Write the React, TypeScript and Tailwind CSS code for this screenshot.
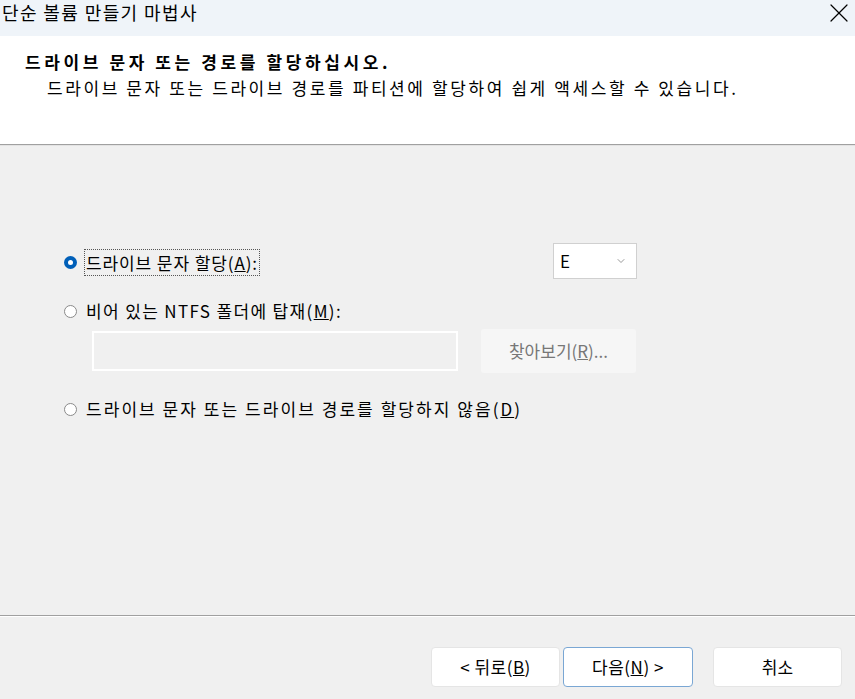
import { ChevronDown, X } from 'lucide-react';

const font = { fontFamily: '"Noto Sans CJK KR", "Noto Sans", sans-serif' };

function Radio({ checked }: { checked?: boolean }) {
  return checked ? (
    <span className="inline-flex h-[13px] w-[13px] shrink-0 items-center justify-center rounded-full bg-[#005fb8]">
      <span className="h-[5px] w-[5px] rounded-full bg-white" />
    </span>
  ) : (
    <span className="inline-block h-[13px] w-[13px] shrink-0 rounded-full border border-[#8a8a8a] bg-white" />
  );
}

export default function App() {
  return (
    <div className="flex h-[699px] w-[855px] flex-col bg-[#f0f0f0] text-[17px] text-black" style={font}>
      {/* 제목 표시줄 */}
      <div className="flex h-[36px] items-start justify-between bg-[#eff4f9] pl-[2px]">
        <span className="mt-[2px] text-[18px] leading-[20px] tracking-[1.4px]">단순 볼륨 만들기 마법사</span>
        <X className="mt-[-3px] h-[32px] w-[32px]" strokeWidth={0.9} />
      </div>

      {/* 헤더 */}
      <div className="h-[108px] bg-white pl-[25px] pt-[15px]">
        <div className="text-[17px] font-bold leading-[22px] tracking-[3.6px]">드라이브 문자 또는 경로를 할당하십시오.</div>
        <div className="mt-[3px] pl-[22px] text-[17px] leading-[24px] tracking-[2.6px]">
          드라이브 문자 또는 드라이브 경로를 파티션에 할당하여 쉽게 액세스할 수 있습니다.
        </div>
      </div>
      <div className="h-px bg-[#a0a0a0]" />
      <div className="h-px bg-[#e3e3e3]" />

      {/* 본문 */}
      <div className="flex h-[469px] flex-col pl-[64px] pt-[97px]">
        <div className="flex h-[36px] items-start">
          <div className="flex w-[489px] items-center pt-[6px]">
            <Radio checked />
            <span className="ml-[7px] border border-dotted border-[#555] pl-[1px] pr-[1px] leading-[25px] tracking-[0.9px]">
              드라이브 문자 할당(<u>A</u>):
            </span>
          </div>
          <div className="flex h-[36px] w-[84px] items-center justify-between border border-[#d0d0d0] bg-white pl-[6px] pr-[9px]">
            <span className="text-[17px]">E</span>
            <ChevronDown className="h-[12px] w-[12px] text-[#777]" strokeWidth={1.5} />
          </div>
        </div>

        <div className="mt-[20px] flex h-[24px] items-center">
          <Radio />
          <span className="ml-[9px] tracking-[1.35px]">
            비어 있는 NTFS 폴더에 탑재(<u>M</u>):
          </span>
        </div>

        <div className="mt-[6px] flex items-center pl-[28px]">
          <div className="h-[40px] w-[366px] border-2 border-white bg-[#f0f0f0]" />
          <div className="ml-[23px] flex h-[44px] w-[155px] items-center justify-center rounded-[3px] bg-[#f6f6f6] text-[#777]">
            <span>
              찾아보기(<u>R</u>)...
            </span>
          </div>
        </div>

        <div className="mt-[24px] flex h-[24px] items-center">
          <Radio />
          <span className="ml-[9px] tracking-[2.05px]">
            드라이브 문자 또는 드라이브 경로를 할당하지 않음(<u>D</u>)
          </span>
        </div>
      </div>

      <div className="h-px bg-[#a0a0a0]" />
      <div className="h-px bg-white" />

      {/* 하단 버튼 */}
      <div className="flex flex-1 items-start pl-[431px] pt-[30px]">
        <button className="h-[40px] w-[129px] rounded-[4px] border border-[#e5e5e5] bg-white text-[17px] tracking-[0.5px]">
          &lt; 뒤로(<u>B</u>)
        </button>
        <button className="ml-[3px] h-[40px] w-[130px] rounded-[4px] border border-[#7aa7d4] bg-white text-[17px] tracking-[0.5px]">
          다음(<u>N</u>) &gt;
        </button>
        <button className="ml-[20px] h-[40px] w-[129px] rounded-[4px] border border-[#e5e5e5] bg-white text-[17px]">
          취소
        </button>
      </div>
    </div>
  );
}
